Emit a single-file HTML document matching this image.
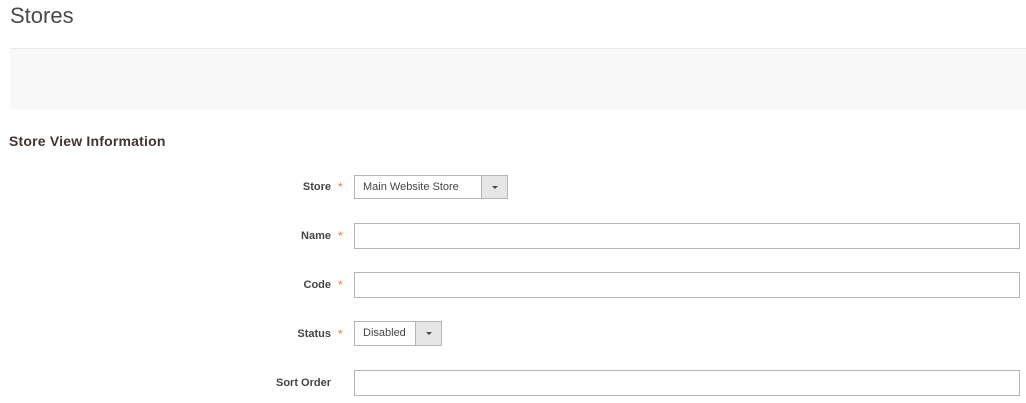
<!DOCTYPE html>
<html><head><style>
body{margin:0;width:1026px;height:403px;background:#fff;font-family:"Liberation Sans",sans-serif;color:#333;position:relative;overflow:hidden}
.a{position:absolute}
h1{position:absolute;left:10px;top:0;margin:0;font-weight:normal;font-size:22px;color:#4a4a4a;line-height:32px}
.bar{left:10px;top:48px;width:1016px;height:60px;background:#f8f8f8;border-top:1px solid #e9e9e9}
.sec{left:9px;top:133px;font-size:14px;font-weight:bold;color:#41362f;letter-spacing:0.2px}
.lbl{right:695px;font-size:11px;font-weight:bold;color:#444;text-align:right}
.star{left:338px;color:#eb7a3a;font-size:12px}
.in{left:354px;border:1px solid #b5b5b5;background:#fff;box-sizing:border-box}
.sel{font-size:11px;color:#444;line-height:22px;padding-left:8px}
.btn{position:absolute;right:0;top:0;bottom:0;width:25px;background:#e6e6e6;border-left:1px solid #b5b5b5}
.btn:after{content:"";position:absolute;left:10px;top:10px;border-left:3px solid transparent;border-right:3px solid transparent;border-top:3px solid #514943}
</style></head><body>
<h1>Stores</h1>
<div class="a bar"></div>
<div class="a sec">Store View Information</div>

<div class="a lbl" style="top:181px">Store</div><div class="a star" style="top:180px">*</div>
<div class="a in sel" style="top:175px;width:154px;height:24px">Main Website Store<div class="btn"></div></div>

<div class="a lbl" style="top:230px">Name</div><div class="a star" style="top:229px">*</div>
<div class="a in" style="top:223px;width:666px;height:26px"></div>

<div class="a lbl" style="top:279px">Code</div><div class="a star" style="top:278px">*</div>
<div class="a in" style="top:272px;width:666px;height:26px"></div>

<div class="a lbl" style="top:328px">Status</div><div class="a star" style="top:327px">*</div>
<div class="a in sel" style="top:321px;width:88px;height:25px">Disabled<div class="btn"></div></div>

<div class="a lbl" style="top:377px">Sort Order</div>
<div class="a in" style="top:370px;width:666px;height:26px"></div>
</body></html>
